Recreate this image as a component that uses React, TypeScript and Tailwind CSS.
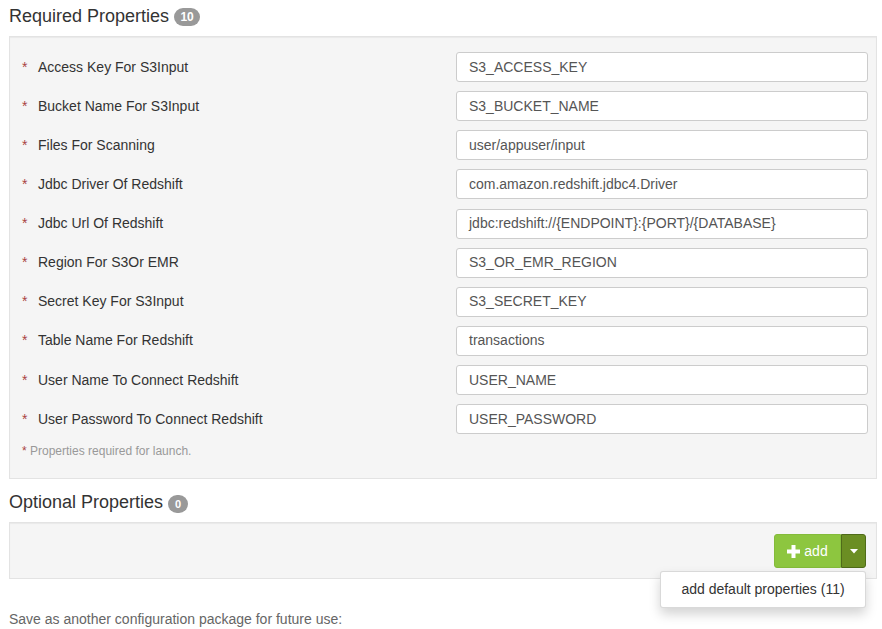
import React from "react";

const rows: [string, string][] = [
  ["Access Key For S3Input", "S3_ACCESS_KEY"],
  ["Bucket Name For S3Input", "S3_BUCKET_NAME"],
  ["Files For Scanning", "user/appuser/input"],
  ["Jdbc Driver Of Redshift", "com.amazon.redshift.jdbc4.Driver"],
  ["Jdbc Url Of Redshift", "jdbc:redshift://{ENDPOINT}:{PORT}/{DATABASE}"],
  ["Region For S3Or EMR", "S3_OR_EMR_REGION"],
  ["Secret Key For S3Input", "S3_SECRET_KEY"],
  ["Table Name For Redshift", "transactions"],
  ["User Name To Connect Redshift", "USER_NAME"],
  ["User Password To Connect Redshift", "USER_PASSWORD"],
];

export default function App() {
  return (
    <div
      className="w-[882px] h-[629px] bg-white text-[#333] overflow-hidden relative"
      style={{ fontFamily: '"Liberation Sans", Arial, sans-serif' }}
    >
      <div className="pl-[9px] pt-[5px] h-[36px] flex items-start">
        <span className="text-[18px] leading-[22px] text-[#333]">Required Properties</span>
        <span className="ml-[5px] mt-[3px] h-[18px] min-w-[26px] px-[6px] rounded-full bg-[#999] text-white text-[12px] font-bold leading-[18px] text-center">
          10
        </span>
      </div>
      <div className="ml-[9px] w-[868px] h-[443px] border border-[#e3e3e3] bg-[#f5f5f5] shadow-[inset_0_1px_1px_rgba(0,0,0,0.05)] pt-[15px]">
        {rows.map(([label, value]) => (
          <div key={label} className="flex items-center h-[30px] mb-[9.15px]">
            <div className="flex-1 flex items-center pl-[12px] text-[14px]">
              <span className="w-[16px] text-[#a94442]">*</span>
              <span className="text-[#333]">{label}</span>
            </div>
            <div className="w-[412px] mr-[8px] h-[30px] border border-[#ccc] rounded-[3px] bg-white flex items-center pl-[12px] text-[14px] text-[#555]">
              {value}
            </div>
          </div>
        ))}
        <div className="pl-[12px] mt-[3px] text-[12px] leading-[17px] text-[#999]">
          <span className="text-[#a94442]">*</span> Properties required for launch.
        </div>
      </div>
      <div className="pl-[9px] pt-[12px] h-[43px] flex items-start">
        <span className="text-[18px] leading-[22px] text-[#333]">Optional Properties</span>
        <span className="ml-[5px] mt-[4px] h-[18px] min-w-[20px] px-[6px] rounded-full bg-[#999] text-white text-[11px] font-bold leading-[18px] text-center">
          0
        </span>
      </div>
      <div className="ml-[9px] w-[868px] h-[57px] border border-[#e3e3e3] bg-[#f5f5f5] shadow-[inset_0_1px_1px_rgba(0,0,0,0.05)] flex justify-end items-start pt-[11px] pr-[10px]">
        <div className="flex h-[34px] relative">
          <div className="w-[67px] h-[34px] bg-[#8dc63f] rounded-l-[3px] border border-[#84bb3a] flex items-center justify-center text-white text-[14px]">
            <svg width="13" height="13" viewBox="0 0 13 13" className="mr-[4px]">
              <rect x="4.5" y="0" width="4" height="13" fill="white" />
              <rect x="0" y="4.5" width="13" height="4" fill="white" />
            </svg>
            add
          </div>
          <div className="w-[25px] h-[34px] bg-[#6b8e23] border border-[#4f6b19] rounded-r-[3px] flex items-center justify-center">
            <svg width="8" height="5" viewBox="0 0 8 5">
              <path d="M0 0 L8 0 L4 4.5 Z" fill="white" />
            </svg>
          </div>
        </div>
      </div>
      <div className="absolute left-[660px] top-[571px] w-[206px] h-[37px] bg-white border border-[rgba(0,0,0,0.15)] rounded-[3px] shadow-[0_6px_12px_rgba(0,0,0,0.175)] flex items-center justify-center text-[14px] text-[#333]">
        add default properties (11)
      </div>
      <div className="pl-[9px] pt-[30px] text-[14px] text-[#666]">
        Save as another configuration package for future use:
      </div>
    </div>
  );
}
